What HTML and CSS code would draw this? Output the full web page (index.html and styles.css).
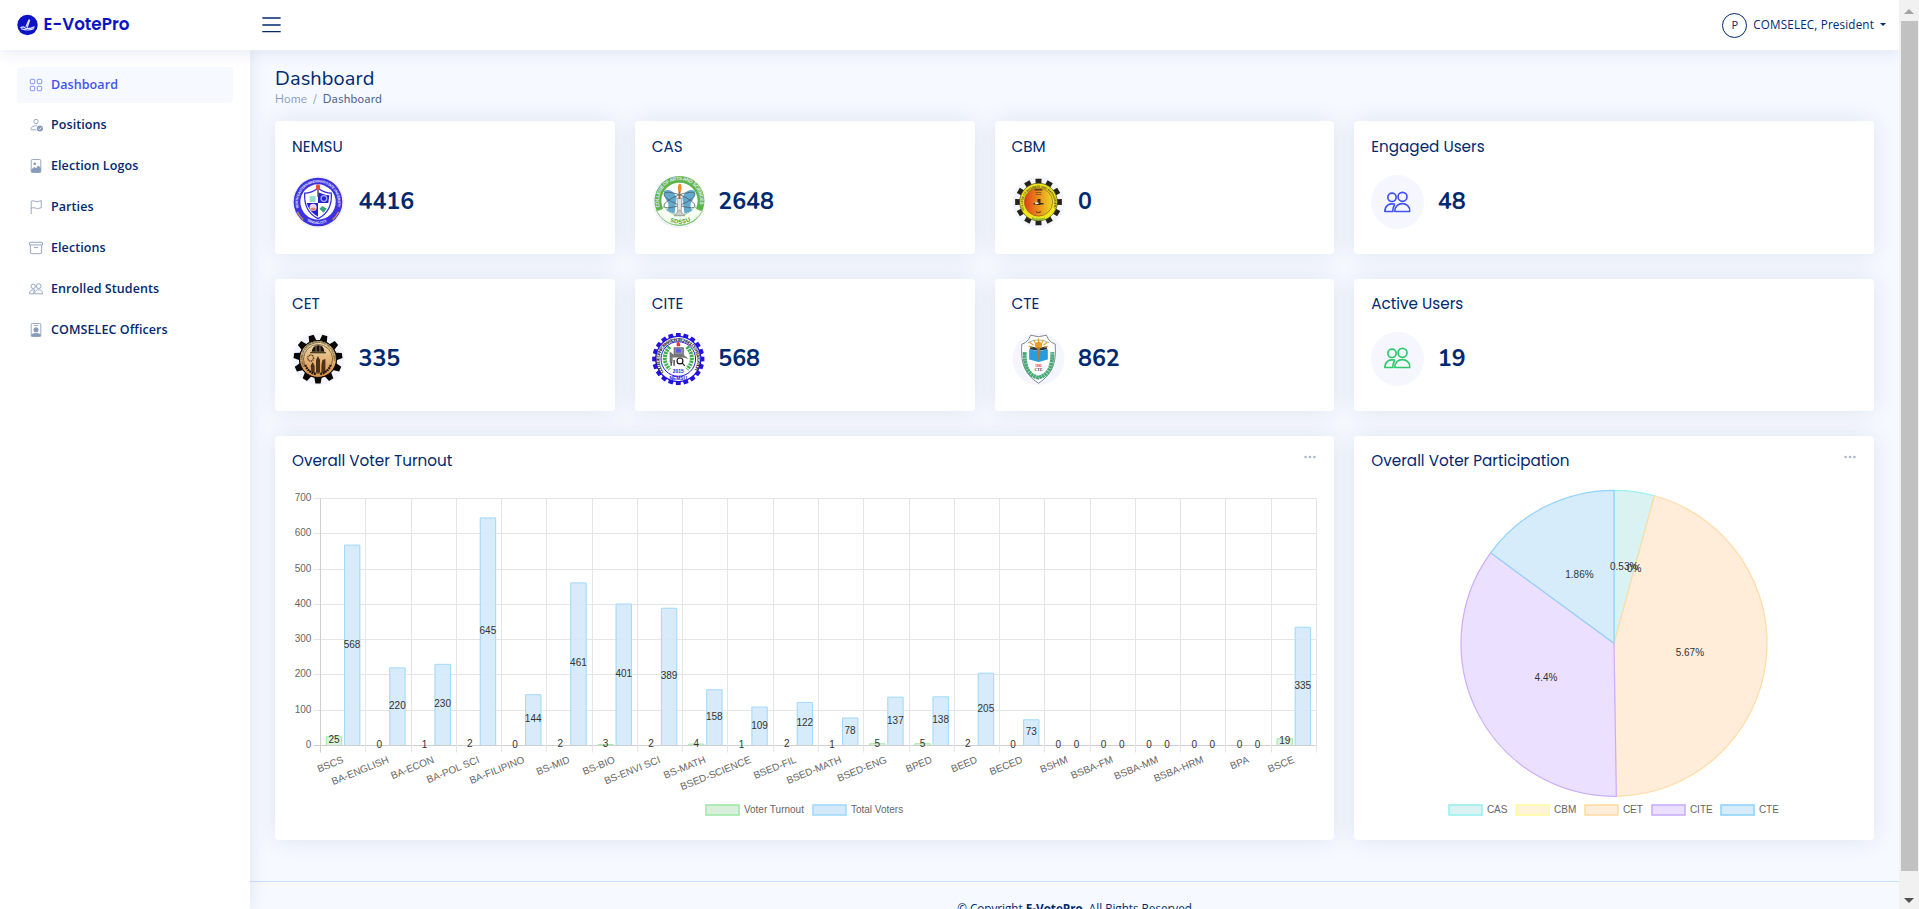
FILE: index.html
```html
<!DOCTYPE html>
<html lang="en">
<head>
<meta charset="utf-8">
<title>Dashboard - E-VotePro</title>
<link rel="stylesheet" href="styles.css">
</head>
<body>
<svg class="defs" aria-hidden="true">
  <symbol id="people" viewBox="0 0 16 16"><g fill="none" stroke="currentColor"><circle cx="4.800" cy="5" r="2.500"/><circle cx="11.100" cy="4.700" r="2.700"/><path d="M6.500 13.500c-.3-6.300 9.300-6.300 9 0z" stroke-linejoin="round"/><path d="M6.500 9.100C3 8.300.6 10 .5 13.500H5.300C5.200 11.700 5.700 10.300 6.500 9.100" stroke-linejoin="round"/></g></symbol>
  <symbol id="dots" viewBox="0 0 16 16"><g fill="currentColor"><circle cx="3" cy="8" r="1.500"/><circle cx="8" cy="8" r="1.500"/><circle cx="13" cy="8" r="1.500"/></g></symbol>
</svg>

<div class="window">
<div class="page">
  <header class="header">
    <a class="brand">
      <svg class="brand-mark" viewBox="0 0 22 22"><circle cx="11" cy="11" r="10.700" fill="#0b13c4"/><path d="M9.500 12.500 12.600 5.500M11 13l2.200-7M4 13.500l3-.5 2 1.500h5l4-1.500M4.500 15c4 1.500 9 1.500 13 0" fill="none" stroke="#dfe3ff" stroke-width="1.200" stroke-linecap="round"/></svg>
      <span class="brand-name">E-VotePro</span>
    </a>
    <svg class="menu-icon" viewBox="0 0 19 16"><path d="M.8 1.500h17.400M.8 8.500h17.400M.8 15.200h17.400" stroke="#012970" stroke-width="1.300" stroke-linecap="round"/></svg>
    <div class="user">
      <span class="avatar">P</span>
      <span class="user-name">COMSELEC, President</span>
      <span class="caret"></span>
    </div>
  </header>

  <div class="body">
    <nav class="sidebar">
      <a class="nav-item active"><svg viewBox="0 0 16 16"><g fill="none" stroke="currentColor"><rect x="1.500" y="1.500" width="5" height="5" rx="1"/><rect x="9.500" y="1.500" width="5" height="5" rx="1"/><rect x="1.500" y="9.500" width="5" height="5" rx="1"/><rect x="9.500" y="9.500" width="5" height="5" rx="1"/></g></svg><span>Dashboard</span></a>
      <a class="nav-item"><svg viewBox="0 0 16 16"><g fill="none" stroke="currentColor"><circle cx="8" cy="4" r="2.500"/><path d="M8.500 13.500H2.500C2 11 4 8.500 9 9"/></g><circle cx="12.500" cy="12" r="3.500" fill="currentColor"/><path d="m11 12 1.200 1.200 2-2.500" fill="none" stroke="#fff" stroke-width=".9"/></svg><span>Positions</span></a>
      <a class="nav-item"><svg viewBox="0 0 16 16"><rect x="2.500" y=".6" width="11" height="14.800" rx="1.500" fill="none" stroke="currentColor"/><path d="M2.500 12 6 9l2 1.500 2.500-3 3 2.500v4.500q0 1-1 1h-9q-1 0-1-1z" fill="currentColor"/><circle cx="6.500" cy="5.500" r="1.600" fill="currentColor"/></svg><span>Election Logos</span></a>
      <a class="nav-item"><svg viewBox="0 0 16 16"><path d="M2.500 16V1.500C5-.5 7 2.500 9.500 2c2-.4 3-.8 4.500-1.300v8c-2 .7-3.500 1.300-5.500.8-2-.5-4-1.200-6 0" fill="none" stroke="currentColor"/></svg><span>Parties</span></a>
      <a class="nav-item"><svg viewBox="0 0 16 16"><g fill="none" stroke="currentColor"><rect x=".5" y="1.500" width="15" height="3" rx=".5"/><path d="M1.500 4.500v8q0 2 2 2h9q2 0 2-2v-8M5.500 7.500h5"/></g></svg><span>Elections</span></a>
      <a class="nav-item"><svg><use href="#people"/></svg><span>Enrolled Students</span></a>
      <a class="nav-item"><svg viewBox="0 0 16 16"><rect x="2.500" y=".6" width="11" height="14.800" rx="1.500" fill="none" stroke="currentColor"/><circle cx="8" cy="7.800" r="2.900" fill="currentColor"/><path d="M2.500 13q5.500-3 11 0v2q0 .5-1 .5h-9q-1 0-1-.5zM5.500 2.200h5v1h-5z" fill="currentColor"/></svg><span>COMSELEC Officers</span></a>
    </nav>

    <main class="main">
      <h1 class="page-title">Dashboard</h1>
      <div class="crumbs"><span class="crumb-home">Home</span><span class="crumb-sep">/</span><span class="crumb-here">Dashboard</span></div>

      <section class="grid">
        <article class="card stat">
          <h5 class="card-title">NEMSU</h5>
          <div class="stat-row"><svg class="seal" viewBox="0 0 54 54"><circle cx="26.500" cy="27" r="26.500" fill="#f2f1ff"/><circle cx="26.500" cy="27" r="24.800" fill="#3b31de"/><circle cx="26.500" cy="27" r="18" fill="#fff"/><path id="a1" d="M7 33A20.300 20.300 0 1 1 46 33" fill="none"/><text class="ring ring-light"><textPath href="#a1" textLength="74">NORTH EASTERN MINDANAO STATE UNIVERSITY</textPath></text><path id="a1b" d="M15 46q11.500 7 23 0" fill="none"/><text class="ring ring-light"><textPath href="#a1b" textLength="22">TANDAG CITY</textPath></text><path d="M5.500 37q2 4.500 6 8M47.500 37q-2 4.500-6 8" stroke="#c58a57" stroke-width="1.500" fill="none"/><path d="M26.500 13c-4 3-8 5-13.500 5-1 13 3.500 21 13.500 26 10-5 14.500-13 13.500-26-5.500 0-9.500-2-13.500-5z" fill="#fff" stroke="#3429dc" stroke-width="1.300"/><path d="M26.500 17c4 1.500 7 3 11.500 3l-1 8H26.500zM15 28h11.500v14q-9-5-11.500-14z" fill="#2a20cf"/><path d="M18 21h6v6h-6z" fill="#8fe0c8"/><circle cx="32.500" cy="23.500" r="2.900" fill="none" stroke="#9fb0ff" stroke-width="1.300"/><circle cx="21.500" cy="32.500" r="3.600" fill="#ecd3dc"/><path d="M18.500 34q3-2.500 6 0-3 4-6 0z" fill="#d98075"/><path d="M28 34l3-3 4.500 3-3.500 4z" fill="#35a578"/><path d="M25.800 13h1.500v9h-1.500z" fill="#514c86"/><ellipse cx="26.500" cy="12" rx="2.100" ry="3" fill="#e34c35"/></svg><span class="stat-value">4416</span></div>
        </article>
        <article class="card stat">
          <h5 class="card-title">CAS</h5>
          <div class="stat-row"><svg class="seal" viewBox="0 0 54 54"><circle cx="27" cy="27" r="26.500" fill="#f3f3fd"/><circle cx="28" cy="25.800" r="25.400" fill="#5cb548"/><circle cx="28" cy="25.800" r="18.500" fill="#fff"/><path d="M4.500 36q6-1 8-4 15.500 18 31 0 2 3 8 4-8 14-23.500 14.500T4.500 36z" fill="#f5fff2" stroke="#6fbd5e" stroke-width=".7"/><path id="a2" d="M8 32A21 21 0 1 1 48 32" fill="none"/><text class="ring ring-light ring-cas"><textPath href="#a2" textLength="76">COLLEGE OF ARTS AND SCIENCES</textPath></text><path id="a3" d="M14.500 45q13.500 8 27 0" fill="none"/><text class="ring ring-green"><textPath href="#a3" textLength="22" startOffset="4">SDSSU</textPath></text><path d="M12 16q8-4 13 6l-2 17-8-3q3-5 1-9-4-5-4-11zM44 16q-8-4-13 6l2 17 8-3q-3-5-1-9 4-5 4-11z" fill="#61a9ce"/><g fill="none" stroke="#4f6470" stroke-width=".8"><ellipse cx="28" cy="25" rx="17" ry="5" transform="rotate(22 28 25)"/><ellipse cx="28" cy="25" rx="17" ry="5" transform="rotate(-22 28 25)"/></g><path d="M25.500 23h5l-1 17h-3z" fill="#e4e4e4" stroke="#777" stroke-width=".6"/><path d="M22.500 41l5.500-6 5.500 6z" fill="#ccc" stroke="#777" stroke-width=".6"/><path d="M27 14h2v10h-2z" fill="#ad6733"/><ellipse cx="28.300" cy="12.500" rx="1.800" ry="4" fill="#ee8a2d"/></svg><span class="stat-value">2648</span></div>
        </article>
        <article class="card stat">
          <h5 class="card-title">CBM</h5>
          <div class="stat-row"><svg class="seal" viewBox="0 0 54 54"><defs><linearGradient id="fire"><stop stop-color="#df401d"/><stop offset=".5" stop-color="#ec8e1a"/><stop offset="1" stop-color="#e9d926"/></linearGradient></defs><circle cx="27" cy="27" r="26.500" fill="#f5f5fe"/><path class="gear" data-cx="27" data-cy="27" data-teeth="12" data-root="18.500" data-tip="24" data-wide="9" data-narrow="7.500" data-turn="0" fill="#25221d"/><circle cx="27" cy="27" r="19.200" fill="#efe51c" stroke="#4d4820" stroke-width=".7"/><circle cx="27" cy="27" r="14.400" fill="url(#fire)" stroke="#8f6516" stroke-width=".7"/><path id="a4" d="M12.500 35A16 16 0 1 1 41.500 35" fill="none"/><text class="ring ring-dark"><textPath href="#a4" textLength="62">COLLEGE OF BUSINESS AND MANAGEMENT</textPath></text><path d="M26 24h3v6h-3zM22 28h10v1.500H22zM23 14h8v1.200h-8zM24 17h6v.6h-6zM24 19h6v.5h-6zM24 36q3 3 5 0v2h-4z" fill="#35301d"/><path d="M23.500 27.500h3.500v1.500h-3.500z" fill="#eef"/><path d="M20.500 43.500q6.500 2.500 13 0" stroke="#68b646" stroke-width="2" stroke-dasharray="1.500 .6" fill="none"/></svg><span class="stat-value">0</span></div>
        </article>
        <article class="card stat wide">
          <h5 class="card-title">Engaged Users</h5>
          <div class="stat-row"><span class="round round-blue"><svg><use href="#people"/></svg></span><span class="stat-value">48</span></div>
        </article>

        <article class="card stat lower">
          <h5 class="card-title">CET</h5>
          <div class="stat-row"><svg class="seal" viewBox="0 0 54 54"><defs><linearGradient id="gold" x2="0" y2="1"><stop stop-color="#eddcb0"/><stop offset="1" stop-color="#dc8f43"/></linearGradient></defs><circle cx="27" cy="27" r="26.500" fill="#f4f4fe"/><path class="gear" data-cx="26.500" data-cy="27" data-teeth="11" data-root="19.500" data-tip="25" data-wide="11" data-narrow="6" data-turn="16.364" fill="#090806"/><circle cx="26.500" cy="27" r="18.800" fill="url(#gold)" stroke="#0b0907"/><circle cx="26.500" cy="27" r="14.800" fill="none" stroke="#443221" stroke-width=".6"/><path id="a5" d="M13 34.500A15.700 15.700 0 1 1 40 34.500" fill="none"/><text class="ring ring-dark"><textPath href="#a5" textLength="60">COLLEGE OF ENGINEERING AND TECHNOLOGY</textPath></text><path d="M20 19.500q1-6 6.500-6.500t6.500 6.500zM18.500 20h16v1.200h-16z" fill="#17110b"/><path d="M24.500 13.500v6M28.500 13.500v6" stroke="#caa878" stroke-width=".7"/><circle cx="19" cy="26" r="3" fill="none" stroke="#4b3321" stroke-width="1.500" stroke-dasharray="1 .7"/><path d="M20 41l-1-7 2-4 2 4v7zM24.500 41V28l2-4 2 4v13zM30 41v-8l1-5 3-1v14z" fill="#4b301c"/><path d="M13.500 33q3 8 11 9.500M39.500 33q-3 8-11 9.500" stroke="#231810" stroke-width="2.300" stroke-dasharray="1.800 .8" fill="none"/></svg><span class="stat-value">335</span></div>
        </article>
        <article class="card stat lower">
          <h5 class="card-title">CITE</h5>
          <div class="stat-row"><svg class="seal" viewBox="0 0 54 54"><path class="gear" data-cx="26.800" data-cy="27" data-teeth="20" data-root="23.300" data-tip="26.700" data-wide="6.500" data-narrow="5" data-turn="0" fill="#2413dc"/><circle cx="26.800" cy="27" r="23.500" fill="#2413dc"/><circle cx="26.800" cy="27" r="22.300" fill="#fff"/><path id="a6" d="M12 40.500A19.300 19.300 0 1 1 41.600 40.500" fill="none"/><text class="ring ring-black"><textPath href="#a6" textLength="84">COLLEGE OF INFORMATION TECHNOLOGY EDUCATION</textPath></text><circle cx="26.800" cy="27" r="17.600" fill="none" stroke="#2413dc" stroke-width="1"/><path d="M18 14.500q-10 12 0 23M35.600 14.500q10 12 0 23" fill="none" stroke="#3fae50" stroke-width="4" stroke-dasharray="2.300 .8"/><path d="M22.500 15.500h9.500v7h-9.500z" fill="#91949a" stroke="#333" stroke-width=".6"/><path d="M24.500 16.500h5v4h-5z" fill="#5a5af0"/><path d="M18 19l4.500 4h10l5 4-6-1.500H21v5h-3z" fill="#777"/><circle cx="28.500" cy="29" r="3" fill="#fff" stroke="#151515" stroke-width="1.200"/><path d="m30.500 31 3 3M22.500 28v6M19.500 30v4" stroke="#222" stroke-width="1.200"/><path d="M25.300 14q-1-3 1.500-4.500 3 2.500 1.500 4.500z" fill="#ee3027"/><text class="seal-year" x="26.800" y="41">2015</text><text class="seal-name" x="26.800" y="48.500">NEMSU</text></svg><span class="stat-value">568</span></div>
        </article>
        <article class="card stat lower">
          <h5 class="card-title">CTE</h5>
          <div class="stat-row"><svg class="seal" viewBox="0 0 54 54"><circle cx="27" cy="27" r="26.500" fill="#f5f5fe"/><path d="M19 2.800q8 3 16 0l2 4q3 4 7 5c1 17-1 29-17 40C11 41 9 29 10 12q4-1 7-5z" fill="#fff" stroke="#717984" stroke-width=".9"/><path d="M16 10.500q11-6 22 0" fill="none" stroke="#717984" stroke-width=".6"/><path d="M13 20q-1 23 14 26 15-4 14-26" fill="none" stroke="#46a977" stroke-width="4" stroke-dasharray="2.600 .4"/><path d="M17.500 27.500V17l9.500 2 9.500-2v10.500L27 30z" fill="#279dde"/><path d="M18 17l9 1.500 9-1.500-1-3-8 2-8-2z" fill="#273344"/><path d="M17 14l4 1M18 10l4 3M22 7.500l2 4M27 6v6M32 7.500l-2 4M36 10l-4 3M37 14l-4 1" stroke="#e6a32e" stroke-width="1.200"/><circle cx="27" cy="13" r="3.600" fill="#ef9a25"/><path d="M26 15h2l.8 5-1.800 9-1.800-9z" fill="#b37934"/><text class="seal-red" x="27" y="35">1982</text><text class="seal-cte" x="27" y="39.500">CTE</text></svg><span class="stat-value">862</span></div>
        </article>
        <article class="card stat lower wide">
          <h5 class="card-title">Active Users</h5>
          <div class="stat-row"><span class="round round-green"><svg><use href="#people"/></svg></span><span class="stat-value">19</span></div>
        </article>

        <article class="card chart-card bars">
          <div class="chart-head"><h5 class="card-title">Overall Voter Turnout</h5><svg class="more"><use href="#dots"/></svg></div>
          <svg class="chart" id="turnout" viewBox="292 486 1026 336" width="1026" height="336"></svg>
        </article>
        <article class="card chart-card wide">
          <div class="chart-head"><h5 class="card-title">Overall Voter Participation</h5><svg class="more"><use href="#dots"/></svg></div>
          <svg class="chart" id="participation" viewBox="1371 486 486 336" width="486" height="336"></svg>
        </article>
      </section>

      <footer class="footer">© Copyright <strong>E-VotePro</strong>. All Rights Reserved</footer>
    </main>
  </div>
</div>
<div class="scrollbar"><span class="arrow-up"></span><span class="thumb"></span><span class="arrow-down"></span></div>
</div>
<script src="charts.js"></script>
</body>
</html>
```

FILE: styles.css
```css
* { box-sizing: border-box; }
html, body { height: 100%; }
body {
  margin: 0;
  overflow: hidden;
  background: #f6f9ff;
  color: #012970;
  font-family: "Open Sans", "Noto Sans", sans-serif;
  font-size: 12px;
}
.defs { position: absolute; width: 0; height: 0; }
.window { display: flex; height: 909px; overflow: hidden; }
.page { width: 1899px; flex: none; overflow: hidden; }

.header {
  position: relative;
  z-index: 3;
  height: 50px;
  padding: 0 13px 0 17px;
  display: flex;
  align-items: center;
  background: #fff;
  box-shadow: 0 2px 17px rgba(1, 41, 112, .1);
}
.brand { width: 245px; display: flex; align-items: center; gap: 5.500px; }
.brand-mark { width: 21px; height: 22px; }
.brand-name {
  font: 600 16.800px/20px "Poppins", Inter, sans-serif;
  color: #0b13c4;
  margin-top: -2px;
}
.menu-icon { width: 19px; height: 17px; margin-top: -1px; }
.user { margin-left: auto; display: flex; align-items: center; gap: 6px; font-weight: 500; }
.avatar {
  width: 25px; height: 25px;
  border: 1px solid #012970;
  border-radius: 50%;
  font-size: 11px; line-height: 22px;
  text-align: center;
}
.user-name { font-size: 11.700px; letter-spacing: .15px; margin-top: -2px; }
.caret { border: 3px solid transparent; border-top-color: #012970; border-bottom: 0; margin-top: -1px; }

.body { display: flex; height: 859px; }
.sidebar {
  position: relative;
  z-index: 2;
  width: 250px;
  flex: none;
  padding: 17px;
  display: flex;
  flex-direction: column;
  gap: 4.900px;
  background: #fff;
  box-shadow: 0 0 17px rgba(1, 41, 112, .1);
}
.nav-item {
  height: 36px;
  flex: none;
  padding-left: 12px;
  display: flex;
  align-items: center;
  gap: 8px;
  border-radius: 3px;
  font-size: 12.500px;
  font-weight: 550;
  letter-spacing: .08px;
}
.nav-item span { margin-top: -2px; }
.nav-item svg { width: 14px; height: 14px; margin-top: -1px; color: #899bbd; }
.nav-item.active { background: #f6f9ff; color: #4154f1; }
.nav-item.active svg { color: #7481f4; }

.main { flex: 1; padding: 17px 0 0; }
.page-title { margin: 0 25px; font: 400 20px/24px "Nunito", Lato, sans-serif; letter-spacing: .1px; }
.crumbs { margin: 0 25px 13px; height: 17px; display: flex; gap: 6px; font: 400 11.700px/17px "Nunito", Lato, sans-serif; letter-spacing: .15px; color: #899bbd; }
.crumb-here { color: #51678f; font-weight: 500; }

.grid {
  margin: 0 25px;
  display: grid;
  grid-template-columns: repeat(9, 1fr);
  grid-template-rows: 132.700px 132.700px 403.700px;
  gap: 25px 20px;
}
.card { grid-column: span 2; padding: 0 17px; border-radius: 4px; background: #fff; box-shadow: 0 0 25px rgba(1, 41, 112, .1); }
.card.wide { grid-column: span 3; }
.card.bars { grid-column: span 6; }
.card-title { margin: 0; padding-top: 17px; font: 400 15.200px/18px "Poppins", Inter, sans-serif; }
.lower .card-title { padding-top: 16px; }
.stat-row { margin-top: 19px; display: flex; align-items: center; gap: 13.500px; }
.seal, .round { width: 53px; height: 54px; }
.round { border-radius: 50%; background: #f6f6fe; display: flex; align-items: center; justify-content: center; }
.round svg { width: 26.700px; height: 26.700px; }
.round-blue { color: #4154f1; }
.round-green { color: #2eca6a; }
.stat-value { font: 680 23.200px/30px "Nunito", Lato, sans-serif; }

.chart-head { display: flex; justify-content: space-between; height: 50px; }
.chart-head .card-title { padding-top: 16px; }
.more { width: 14px; height: 14px; margin: 14px 0 0; color: #aab7cf; }
.chart { display: block; }
.chart text { font: 10px "Liberation Sans", Arial, sans-serif; fill: #666; }
.chart .value { fill: #333; }
.end { text-anchor: end; }
.mid { text-anchor: middle; }
.gridline { stroke: #e5e5e5; }
.axis { stroke: #cfcfcf; }

.ring { font: 700 3.600px "Liberation Sans", sans-serif; }
.ring-light { fill: #e8eaff; }
.ring-cas { font-size: 5px; }
.ring-green { fill: #3f9e3b; font-size: 6px; }
.ring-dark { fill: #4a4018; font-size: 3px; }
.ring-black { fill: #15151c; font-size: 4.500px; }
.seal-year, .seal-name, .seal-red, .seal-cte { font: 700 5px "Liberation Sans", sans-serif; text-anchor: middle; fill: #2413dc; }
.seal-red { font-size: 3px; fill: #d33; }
.seal-cte { font: 700 4px "Liberation Serif", serif; fill: #333; }

.footer { margin-top: 41px; border-top: 1px solid #cddfff; padding-top: 16px; text-align: center; font-size: 11.700px; line-height: 20px; }

.scrollbar { width: 20px; display: flex; flex-direction: column; align-items: center; background: #f1f1f1; }
.arrow-up { margin-top: 9px; border: 5px solid transparent; border-top: 0; border-bottom-color: #a3a3a3; }
.thumb { margin-top: 7px; width: 17px; height: 850px; background: #c1c1c1; }
.arrow-down { margin-top: 27px; border: 5px solid transparent; border-bottom: 0; border-top-color: #505050; }
```

FILE: charts.js
```js
function put(parent, name, attrs, text) {
  const el = document.createElementNS('http://www.w3.org/2000/svg', name);
  for (const key in attrs) el.setAttribute(key, attrs[key]);
  if (text !== undefined) el.textContent = text;
  parent.appendChild(el);
  return el;
}

const BLUE = ['#d3e9fa', '#a3dafb'];
const GREEN = ['#d8efdb', '#a0e9a8'];

function legend(svg, items, y) {
  for (const [x, label, colors] of items) {
    put(svg, 'rect', { x: x + 1, y: y - 5, width: 33, height: 10, fill: colors[0], stroke: colors[1], 'stroke-width': 1.6 });
    put(svg, 'text', { x: x + 38.9, y: y + 3.2 }, label);
  }
}

// Turnout bars
const courses = [
  ['BSCS', 25, 568], ['BA-ENGLISH', 0, 220], ['BA-ECON', 1, 230], ['BA-POL SCI', 2, 645],
  ['BA-FILIPINO', 0, 144], ['BS-MID', 2, 461], ['BS-BIO', 3, 401], ['BS-ENVI SCI', 2, 389],
  ['BS-MATH', 4, 158], ['BSED-SCIENCE', 1, 109], ['BSED-FIL', 2, 122], ['BSED-MATH', 1, 78],
  ['BSED-ENG', 5, 137], ['BPED', 5, 138], ['BEED', 2, 205], ['BECED', 0, 73], ['BSHM', 0, 0],
  ['BSBA-FM', 0, 0], ['BSBA-MM', 0, 0], ['BSBA-HRM', 0, 0], ['BPA', 0, 0], ['BSCE', 19, 335]
];
const bar = document.getElementById('turnout');
const left = 320.5, right = 1316.5, zero = 745.5, top700 = 498.5;
const step = (right - left) / courses.length;
const unit = (zero - top700) / 700;
for (let v = 0; v <= 700; v += 100) {
  const y = Math.floor(zero - v * unit) + .5;
  put(bar, 'line', { x1: left - 7, x2: right, y1: y, y2: y, class: v ? 'gridline' : 'axis' });
  put(bar, 'text', { x: 311.4, y: y + 2.8, class: 'end' }, v);
}
for (let i = 0; i <= courses.length; i++) {
  const x = Math.floor(left + i * step) + .5;
  put(bar, 'line', { x1: x, x2: x, y1: top700, y2: zero + 7, class: i ? 'gridline' : 'axis' });
}
courses.forEach(([name, voted, total], i) => {
  const x0 = left + i * step;
  [[voted, 5.4, GREEN], [total, 23.5, BLUE]].forEach(([value, dx, colors]) => {
    const h = value * unit, x = x0 + dx, w = 16.3;
    if (value > 2) {
      put(bar, 'rect', { x: x, y: zero - h, width: w, height: h - .5, fill: colors[0], 'fill-opacity': .9 });
      put(bar, 'path', { d: `M${x + .5} ${zero - .5}V${zero - h}h${w - 1}V${zero - .5}`, fill: 'none', stroke: colors[1] });
    }
  });
});
courses.forEach(([name, voted, total], i) => {
  const x0 = left + i * step;
  [[voted, 13.5], [total, 31.6]].forEach(([value, dx]) => {
    put(bar, 'text', { x: x0 + dx, y: zero - value * unit / 2 + 2.3, class: 'mid value' }, value);
  });
  put(bar, 'text', { transform: `translate(${x0 + step / 2 - .3} 759) rotate(-22)`, y: 3.5, class: 'end' }, name);
});
legend(bar, [[705, 'Voter Turnout', GREEN], [812, 'Total Voters', BLUE]], 810);

// Participation pie
const pie = document.getElementById('participation');
const slices = [
  ['CAS', .53, ['#daf2f2', '#9af1ee']], ['CBM', 0, ['#fff3d9', '#fffb9f']],
  ['CET', 5.67, ['#ffecd9', '#ffdca6']], ['CITE', 4.4, ['#ebe0ff', '#c9aefb']],
  ['CTE', 1.86, ['#d7ecfb', '#92d3fb']]
];
const sum = slices.reduce((s, a) => s + a[1], 0);
const cx = 1614, cy = 643.3, r = 153;
const point = (angle, radius) => [cx + radius * Math.sin(angle), cy - radius * Math.cos(angle)];
const labels = [];
let angle = 0;
for (const [name, value, colors] of slices) {
  const next = angle + value / sum * Math.PI * 2;
  if (value) {
    put(pie, 'path', {
      d: `M${cx} ${cy}L${point(angle, r)}A${r} ${r} 0 0 1 ${point(next, r)}Z`,
      fill: colors[0], stroke: colors[1], 'stroke-width': 1.2, 'stroke-linejoin': 'bevel'
    });
  }
  labels.push([point((angle + next) / 2, r / 2), value + '%']);
  angle = next;
}
for (const [[x, y], text] of labels) put(pie, 'text', { x, y: y + 2.6, class: 'mid value' }, text);
legend(pie, [1448, 1515.2, 1584, 1651, 1720].map((x, i) => [x, slices[i][0], slices[i][2]]), 810);

// Toothed outlines of the gear-shaped seals
document.querySelectorAll('.gear').forEach(path => {
  const d = {};
  for (const key in path.dataset) d[key] = Number(path.dataset[key]);
  const points = [];
  for (let i = 0; i < d.teeth; i++) {
    for (const [deg, radius] of [[-d.wide, d.root], [-d.narrow, d.tip], [d.narrow, d.tip], [d.wide, d.root]]) {
      const t = (i * 360 / d.teeth + d.turn + deg) * Math.PI / 180;
      points.push((d.cx + radius * Math.sin(t)).toFixed(2) + ' ' + (d.cy - radius * Math.cos(t)).toFixed(2));
    }
  }
  path.setAttribute('d', 'M' + points.join('L') + 'Z');
});
```
